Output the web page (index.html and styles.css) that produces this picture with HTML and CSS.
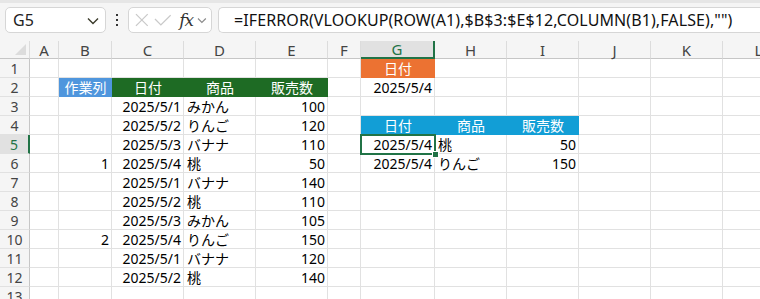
FILE: index.html
```html
<!DOCTYPE html>
<html>
<head>
<meta charset="UTF-8">
<title>Book1 - Excel</title>
<link rel="stylesheet" href="styles.css">
</head>
<body>
<div class="toolbar">
    <div class="name-box">
        <span>G5</span>
        <svg class="chev" width="12" height="8" viewBox="0 0 12 8"><polyline points="1,1.5 6,6.5 11,1.5" fill="none" stroke="#3b3b2b" stroke-width="1.4"/></svg>
    </div>
    <div class="dots"><i></i><i></i><i></i></div>
    <div class="fx-box">
        <svg width="16" height="16" viewBox="0 0 16 16"><path d="M2 2 L14 14 M14 2 L2 14" stroke="#c9c9c9" stroke-width="1.3" fill="none"/></svg>
        <svg width="18" height="16" viewBox="0 0 18 16"><polyline points="1,7 7,13 17,3" stroke="#c9c9c9" stroke-width="1.3" fill="none"/></svg>
        <span class="fx">fx</span>
        <svg width="10" height="7" viewBox="0 0 10 7"><polyline points="1,1.5 5,5.5 9,1.5" fill="none" stroke="#8a8a8a" stroke-width="1.2"/></svg>
    </div>
    <div class="formula">=IFERROR(VLOOKUP(ROW(A1),$B$3:$E$12,COLUMN(B1),FALSE),"")</div>
</div>

<table class="sheet">
    <colgroup>
        <col style="width:30px"><col style="width:29px"><col style="width:53px"><col style="width:72px"><col style="width:72px"><col style="width:72px"><col style="width:33px"><col style="width:74px"><col style="width:72px"><col style="width:72px"><col style="width:72px"><col style="width:72px"><col style="width:72px">
    </colgroup>
    <tr class="col-head">
        <th class="corner"><span></span></th><th>A</th><th>B</th><th>C</th><th>D</th><th>E</th><th>F</th><th class="active">G</th><th>H</th><th>I</th><th>J</th><th>K</th><th>L</th>
    </tr>
    <tr>
        <th>1</th><td></td><td></td><td></td><td></td><td></td><td></td><td class="orange">日付</td><td></td><td></td><td></td><td></td><td></td>
    </tr>
    <tr>
        <th>2</th><td></td><td class="blue">作業列</td><td class="green">日付</td><td class="green">商品</td><td class="green">販売数</td><td></td><td class="r">2025/5/4</td><td></td><td></td><td></td><td></td><td></td>
    </tr>
    <tr>
        <th>3</th><td></td><td></td><td class="r">2025/5/1</td><td>みかん</td><td class="r">100</td><td></td><td></td><td></td><td></td><td></td><td></td><td></td>
    </tr>
    <tr>
        <th>4</th><td></td><td></td><td class="r">2025/5/2</td><td>りんご</td><td class="r">120</td><td></td><td class="cyan">日付</td><td class="cyan">商品</td><td class="cyan">販売数</td><td></td><td></td><td></td>
    </tr>
    <tr>
        <th class="active">5</th><td></td><td></td><td class="r">2025/5/3</td><td>バナナ</td><td class="r">110</td><td></td><td class="r sel">2025/5/4<div class="sel-box"><span class="handle"></span></div></td><td>桃</td><td class="r">50</td><td></td><td></td><td></td>
    </tr>
    <tr>
        <th>6</th><td></td><td class="r">1</td><td class="r">2025/5/4</td><td>桃</td><td class="r">50</td><td></td><td class="r">2025/5/4</td><td>りんご</td><td class="r">150</td><td></td><td></td><td></td>
    </tr>
    <tr>
        <th>7</th><td></td><td></td><td class="r">2025/5/1</td><td>バナナ</td><td class="r">140</td><td></td><td></td><td></td><td></td><td></td><td></td><td></td>
    </tr>
    <tr>
        <th>8</th><td></td><td></td><td class="r">2025/5/2</td><td>桃</td><td class="r">110</td><td></td><td></td><td></td><td></td><td></td><td></td><td></td>
    </tr>
    <tr>
        <th>9</th><td></td><td></td><td class="r">2025/5/3</td><td>みかん</td><td class="r">105</td><td></td><td></td><td></td><td></td><td></td><td></td><td></td>
    </tr>
    <tr>
        <th>10</th><td></td><td class="r">2</td><td class="r">2025/5/4</td><td>りんご</td><td class="r">150</td><td></td><td></td><td></td><td></td><td></td><td></td><td></td>
    </tr>
    <tr>
        <th>11</th><td></td><td></td><td class="r">2025/5/1</td><td>バナナ</td><td class="r">120</td><td></td><td></td><td></td><td></td><td></td><td></td><td></td>
    </tr>
    <tr>
        <th>12</th><td></td><td></td><td class="r">2025/5/2</td><td>桃</td><td class="r">140</td><td></td><td></td><td></td><td></td><td></td><td></td><td></td>
    </tr>
    <tr>
        <th>13</th><td></td><td></td><td></td><td></td><td></td><td></td><td></td><td></td><td></td><td></td><td></td><td></td>
    </tr>
</table>
</body>
</html>
```

FILE: styles.css
```css
body {
    margin: 0;
    width: 760px;
    height: 299px;
    overflow: hidden;
    background-color: #f5f5f5;
    font-family: "Noto Sans", "Noto Sans CJK JP", sans-serif;
}

/* 数式バー */
.toolbar {
    height: 41px;
    box-sizing: border-box;
    border-top: 3px solid #e6e6e6;
    padding: 4px 0 0 5px;
    display: flex;
    align-items: flex-start;
    white-space: nowrap;
}
.name-box {
    width: 101px;
    height: 26px;
    box-sizing: border-box;
    background-color: #fff;
    border: 1px solid #d6d6d6;
    border-radius: 5px;
    display: flex;
    align-items: center;
    justify-content: space-between;
    padding: 0 6px 0 7px;
    font-size: 16px;
    color: #222;
}
.name-box .chev {
    margin-top: 2px;
}
.dots {
    width: 22px;
    height: 26px;
    display: flex;
    flex-direction: column;
    align-items: center;
    justify-content: center;
    gap: 3px;
}
.dots i {
    width: 2px;
    height: 2px;
    background-color: #333;
}
.fx-box {
    width: 84px;
    height: 26px;
    box-sizing: border-box;
    background-color: #fff;
    border: 1px solid #d6d6d6;
    border-radius: 5px;
    display: flex;
    align-items: center;
    padding: 0 4px 0 5px;
    gap: 4px;
}
.fx {
    font-family: "DejaVu Serif", "Liberation Serif", serif;
    font-style: italic;
    font-size: 17px;
    color: #333;
    margin-left: 4px;
    letter-spacing: -1px;
}
.formula {
    flex: 1;
    margin-left: 6px;
    height: 26px;
    box-sizing: border-box;
    background-color: #fff;
    border: 1px solid #d6d6d6;
    border-right: none;
    border-radius: 5px 0 0 5px;
    padding-left: 15px;
    line-height: 24px;
    font-size: 16px;
    color: #111;
    letter-spacing: 0.1px;
}

/* シート */
.sheet {
    table-layout: fixed;
    border-collapse: separate;
    border-spacing: 0;
    width: 795px;
    background-color: #fff;
    font-family: "Noto Sans", "Noto Sans CJK JP", sans-serif;
    font-size: 14px;
    color: #000;
}
.sheet th, .sheet td {
    height: 19px;
    box-sizing: border-box;
    padding: 0 2px 0 3px;
    border-right: 1px solid #e1e1e1;
    border-bottom: 1px solid #e1e1e1;
    overflow: visible;
    white-space: nowrap;
    line-height: 17px;
    vertical-align: bottom;
}
.sheet th {
    background-color: #f5f5f5;
    font-weight: normal;
    color: #444;
    text-align: center;
    padding: 0;
    font-size: 14px;
    border-right-color: #c6c6c6;
}
.col-head th {
    height: 18px;
    border-right-color: #dcdcdc;
    border-bottom-color: #c6c6c6;
    font-size: 15px;
    line-height: 16px;
}
.col-head th.active {
    background-color: #e1e1e1;
    color: #217346;
    border-bottom: 2px solid #217346;
}
th.active {
    background-color: #e1e1e1;
    color: #217346;
    border-right: 2px solid #217346;
}
.corner {
    position: relative;
}
.corner span {
    position: absolute;
    right: 3px;
    bottom: 3px;
    width: 0;
    height: 0;
    border-left: 11px solid transparent;
    border-bottom: 11px solid #dcdcdc;
}
.r {
    text-align: right;
}
.blue, .green, .orange, .cyan {
    color: #fff;
    text-align: center;
}
.blue {
    background-color: #4f96dd;
    border-color: #4f96dd !important;
}
.green {
    background-color: #1e6b24;
    border-color: #1e6b24 !important;
}
.orange {
    background-color: #ec7232;
    border-color: #ec7232 !important;
}
.cyan {
    background-color: #129ed6;
    border-color: #129ed6 !important;
}

/* 選択セル */
.sel {
    position: relative;
}
.sel-box {
    position: absolute;
    left: -1px;
    top: -1px;
    right: -2px;
    bottom: -2px;
    border: 2px solid #217346;
}
.handle {
    position: absolute;
    right: -5px;
    bottom: -5px;
    width: 5px;
    height: 5px;
    background-color: #217346;
    border: 1px solid #fff;
}
```
